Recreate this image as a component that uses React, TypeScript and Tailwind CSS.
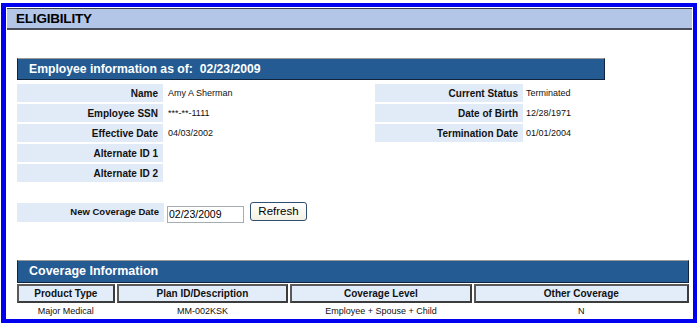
import React from "react";

const F = "font-['Liberation_Sans',Arial,sans-serif]";

function Label({ children, w }: { children: React.ReactNode; w: string }) {
  return (
    <div className={`${w} h-[18px] bg-[#e1eaf7] flex items-center justify-end pr-[5px] text-[10px] font-bold text-[#111]`}>
      {children}
    </div>
  );
}

function Value({ children, w }: { children?: React.ReactNode; w: string }) {
  return <div className={`${w} h-[18px] flex items-center pl-[3px] pt-[1px] text-[9px] text-[#111]`}>{children}</div>;
}

export default function App() {
  const rows: [string, string, string | null, string | null][] = [
    ["Name", "Amy A Sherman", "Current Status", "Terminated"],
    ["Employee SSN", "***-**-1111", "Date of Birth", "12/28/1971"],
    ["Effective Date", "04/03/2002", "Termination Date", "01/01/2004"],
    ["Alternate ID 1", "", null, null],
    ["Alternate ID 2", "", null, null],
  ];
  return (
    <div className={`w-[698px] h-[325px] bg-white overflow-hidden ${F}`}>
      <div className="ml-[1px] mt-[3px] w-[696px] h-[320px] border-t-4 border-r-4 border-b-4 border-l-[5px] border-[#0000f0] bg-white">
        {/* ELIGIBILITY bar */}
        <div className="ml-[1px] mt-[1px] w-[685px] h-[22px] bg-[#b3c6e7] border-t border-[#3b3f4c] border-b-2 border-b-[#4a4e5a] flex items-center pl-[9px]">
          <span className="text-[13.5px] font-bold text-black leading-none tracking-[-0.2px]">ELIGIBILITY</span>
        </div>

        {/* Employee information */}
        <div className="ml-[11px] mt-[28px] w-[588px]">
          <div className="h-[22px] bg-[#245b93] border-t border-t-[#9a9a9a] border-l border-r border-b border-l-[#10243d] border-r-[#10243d] border-b-[#10243d] flex items-center pl-[11px]">
            <span className="text-[12.2px] font-bold text-white leading-none">Employee information as of:&nbsp; 02/23/2009</span>
          </div>
          <div className="mt-[4px] flex flex-col gap-[2px]">
            {rows.map((r) => (
              <div key={r[0]} className="flex">
                <Label w="w-[146px]">{r[0]}</Label>
                <div className="w-[2px]" />
                <Value w="w-[208px]">{r[1]}</Value>
                <div className="w-[2px]" />
                {r[2] ? (
                  <>
                    <Label w="w-[148px]">{r[2]}</Label>
                    <Value w="w-[82px]">{r[3]}</Value>
                  </>
                ) : null}
              </div>
            ))}
          </div>
        </div>

        {/* New coverage date */}
        <div className="ml-[11px] mt-[20px] flex items-start">
          <div className="w-[147px] h-[19px] mt-[1px] bg-[#e1eaf7] flex items-center justify-end pr-[5px] text-[9.5px] font-bold text-[#111]">
            New Coverage Date
          </div>
          <div className="ml-[3px] mt-[4px] w-[77px] h-[17px] border border-[#a5acb2] flex items-center pl-[1px] text-[10.5px] text-black">
            02/23/2009
          </div>
          <button className="ml-[6px] w-[57px] h-[19px] rounded-[3px] border border-[#2f4f73] bg-gradient-to-b from-[#ffffff] to-[#f4f0e2] text-[11.5px] text-black leading-none flex items-center justify-center">
            Refresh
          </button>
        </div>

        {/* Coverage Information */}
        <div className="ml-[11px] mt-[37px] w-[672px]">
          <div className="h-[23px] bg-[#245b93] border-t border-t-[#9a9a9a] border-l border-r border-b border-l-[#10243d] border-r-[#10243d] border-b-[#10243d] flex items-center pl-[11px]">
            <span className="text-[12.5px] font-bold text-white leading-none">Coverage Information</span>
          </div>
          <div className="flex gap-[2px] mt-[1px]">
            {[
              ["w-[98px]", "Product Type"],
              ["w-[172px]", "Plan ID/Description"],
              ["w-[182px]", "Coverage Level"],
              ["w-[216px]", "Other Coverage"],
            ].map(([w, t]) => (
              <div key={t} className={`${w} h-[19px] bg-[#e3edf9] border-2 border-t-[#5a5a5a] border-l-[#5a5a5a] border-r-[#3c3c3c] border-b-[#3c3c3c] flex items-center justify-center text-[10px] font-bold text-[#111]`}>
                {t}
              </div>
            ))}
          </div>
          <div className="flex gap-[2px] mt-[2px]">
            {[
              ["w-[98px]", "Major Medical"],
              ["w-[172px]", "MM-002KSK"],
              ["w-[182px]", "Employee + Spouse + Child"],
              ["w-[216px]", "N"],
            ].map(([w, t]) => (
              <div key={t} className={`${w} h-[13px] flex items-center justify-center text-[9px] text-[#111]`}>
                {t}
              </div>
            ))}
          </div>
        </div>
      </div>
    </div>
  );
}
